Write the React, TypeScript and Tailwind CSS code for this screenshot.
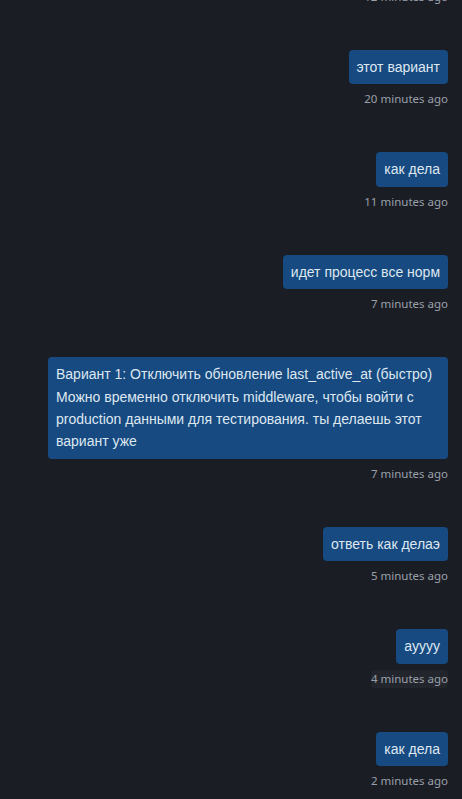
type Msg = {
  text: string;
  time: string;
  hovered?: boolean;
};

const messages: Msg[] = [
  { text: "этот вариант", time: "20 minutes ago" },
  { text: "как дела", time: "11 minutes ago" },
  { text: "идет процесс все норм", time: "7 minutes ago" },
  {
    text: "Вариант 1: Отключить обновление last_active_at (быстро) Можно временно отключить middleware, чтобы войти с production данными для тестирования. ты делаешь этот вариант уже",
    time: "7 minutes ago",
  },
  { text: "ответь как делаэ", time: "5 minutes ago" },
  { text: "ayyyy", time: "4 minutes ago", hovered: true },
  { text: "как дела", time: "2 minutes ago" },
];

const tsFont = { fontFamily: '"Noto Sans", sans-serif' };

function Bubble({ msg }: { msg: Msg }) {
  return (
    <div className="flex flex-col items-end">
      <div className="max-w-[400px] rounded bg-[#164a80] px-2 py-1.5 text-[14px] leading-[1.6] text-[#dfe7f1]">
        {msg.text}
      </div>
      <span
        style={tsFont}
        className={
          msg.hovered
            ? "mt-1.5 rounded bg-[#22252c] text-[11.5px] leading-[18px] text-[#9aa0aa]"
            : "mt-1.5 text-[11.5px] leading-[18px] text-[#9aa0aa]"
        }
      >
        {msg.time}
      </span>
    </div>
  );
}

export default function App() {
  return (
    <div
      className="h-[799px] overflow-hidden bg-[#1b1d24] pl-3.5 pr-3.5"
      style={{ fontFamily: '"Liberation Sans", Arial, sans-serif' }}
    >
      <div className="-mt-[12px] flex flex-col gap-[44px]">
        <div className="flex justify-end">
          <span
            style={tsFont}
            className="text-[11.5px] leading-[18px] text-[#9aa0aa]"
          >
            12 minutes ago
          </span>
        </div>
        {messages.map((m, i) => (
          <Bubble key={i} msg={m} />
        ))}
      </div>
    </div>
  );
}
